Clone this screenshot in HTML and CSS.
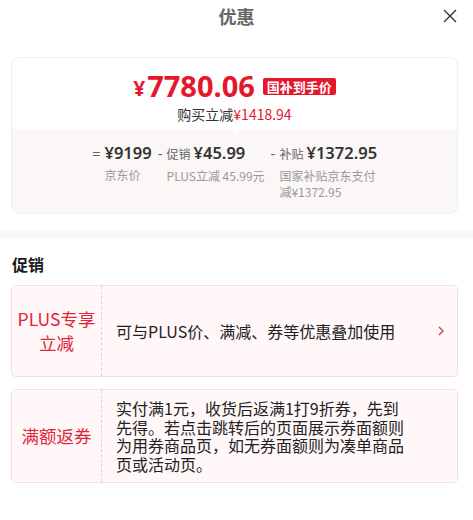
FILE: index.html
```html
<!DOCTYPE html>
<html lang="zh-CN">
<head>
  <meta charset="UTF-8">
  <title>优惠</title>
  <link rel="stylesheet" href="styles.css">
</head>
<body>

<div class="header">
  <span class="title">优惠</span>
  <svg class="close" width="14" height="14" viewBox="0 0 14 14">
    <path d="M1 1 L13 13 M13 1 L1 13" stroke="#333" stroke-width="1.4" fill="none"/>
  </svg>
</div>

<!-- price card -->
<div class="price-card">
  <div class="price-top">
    <div class="price-line">
      <span class="yen">¥</span><span class="price">7780.06</span>
      <span class="badge">国补到手价</span>
    </div>
    <div class="save-line">购买立减<span class="red">¥1418.94</span></div>
  </div>
  <div class="price-bottom">
    <div class="calc">
      <div class="calc-col">
        <span class="sign">=</span>
        <div class="calc-body">
          <div class="calc-main"><span class="num">¥9199</span></div>
          <div class="calc-sub">京东价</div>
        </div>
      </div>
      <div class="calc-col">
        <span class="sign">-</span>
        <div class="calc-body">
          <div class="calc-main"><span class="lbl">促销</span><span class="num">¥45.99</span></div>
          <div class="calc-sub">PLUS立减 45.99元</div>
        </div>
      </div>
      <div class="calc-col">
        <span class="sign">-</span>
        <div class="calc-body">
          <div class="calc-main"><span class="lbl">补贴</span><span class="num">¥1372.95</span></div>
          <div class="calc-sub">国家补贴京东支付<br>减¥1372.95</div>
        </div>
      </div>
    </div>
  </div>
</div>

<div class="band"></div>

<!-- promotions -->
<div class="promo">
  <h2>促销</h2>

  <div class="promo-item">
    <div class="promo-tag">PLUS专享<br>立减</div>
    <div class="promo-body">
      <div class="promo-text">可与PLUS价、满减、券等优惠叠加使用</div>
      <div class="promo-arrow">
        <svg width="6" height="10" viewBox="0 0 6 10">
          <path d="M1 1 L5 5 L1 9" stroke="#cf3f52" stroke-width="1.4" fill="none"/>
        </svg>
      </div>
    </div>
  </div>

  <div class="promo-item">
    <div class="promo-tag">满额返券</div>
    <div class="promo-body">
      <div class="promo-text">实付满1元，收货后返满1打9折券，先到先得。若点击跳转后的页面展示券面额则为用券商品页，如无券面额则为凑单商品页或活动页。</div>
      <div class="promo-arrow"></div>
    </div>
  </div>
</div>

</body>
</html>
```

FILE: styles.css
```css
body {
  margin: 0;
  background: #fff;
  font-family: "Noto Sans CJK SC", "Noto Sans", sans-serif;
  color: #333;
}
.header {
  height: 32px;
  display: flex;
  align-items: center;
  justify-content: center;
  position: relative;
}
.title {
  font-size: 18px;
  font-weight: bold;
  color: #666;
  line-height: 32px;
}
.close {
  position: absolute;
  right: 16px;
  top: 9px;
}
.price-card {
  margin: 25px 15px 0 11px;
  border: 1px solid #eee;
  border-radius: 8px;
  overflow: hidden;
}
.price-top {
  padding: 10px 0 5px;
  text-align: center;
  position: relative;
}
.price-top::after {
  content: "";
  position: absolute;
  left: 50%;
  bottom: -4px;
  margin-left: -4px;
  border-left: 4px solid transparent;
  border-right: 4px solid transparent;
  border-top: 4px solid #fff;
  z-index: 1;
}
.price-line {
  height: 34px;
  display: flex;
  align-items: center;
  justify-content: center;
  color: #e4182c;
}
.yen {
  font-family: "Noto Sans", sans-serif;
  font-size: 21px;
  font-weight: bold;
  margin-top: 6px;
  margin-right: 2px;
}
.price {
  font-family: "Noto Sans", sans-serif;
  font-size: 29px;
  font-weight: bold;
}
.badge {
  margin-left: 8px;
  margin-top: 3px;
  background: #e4182c;
  color: #fff;
  font-size: 13px;
  font-weight: bold;
  line-height: 17px;
  padding: 0 4px;
  border-radius: 2px;
}
.save-line {
  font-size: 14px;
  line-height: 20px;
  margin-top: 2px;
}
.red {
  color: #e4182c;
}
.price-bottom {
  background: #fcf7f7;
  padding: 13px 0 13px;
}
.calc {
  display: flex;
  justify-content: center;
  gap: 6px;
}
.calc-col {
  display: flex;
}
.sign {
  font-family: "Noto Sans", sans-serif;
  font-size: 15px;
  line-height: 22px;
  color: #666;
  margin-right: 4px;
}
.calc-main {
  display: flex;
  align-items: baseline;
  line-height: 22px;
}
.lbl {
  font-size: 12px;
  color: #666;
  margin-right: 3px;
}
.num {
  font-family: "Noto Sans", sans-serif;
  font-size: 16.5px;
  font-weight: 600;
  color: #333;
}
.calc-sub {
  font-size: 12px;
  line-height: 16px;
  color: #999;
  margin-top: 3px;
}
.band {
  height: 7px;
  background: #f6f8fc;
  margin-top: 17px;
}
.promo {
  padding: 0 15px 0 11px;
}
.promo h2 {
  margin: 14px 0 9px 1px;
  font-size: 16px;
  line-height: 24px;
  color: #1a1a1a;
}
.promo-item {
  display: flex;
  min-height: 90px;
  border: 1px solid #f4dde0;
  border-radius: 5px;
  background: #fff7f8;
  margin-bottom: 12px;
}
.promo-tag {
  width: 89px;
  flex-shrink: 0;
  display: flex;
  align-items: center;
  justify-content: center;
  text-align: center;
  font-size: 17.5px;
  line-height: 24px;
  color: #e0243a;
  border-right: 1px dashed #e6cfd2;
}
.promo-body {
  flex: 1;
  display: flex;
  align-items: center;
  padding: 9px 0 9px 14px;
}
.promo-text {
  flex: 1;
  font-size: 16px;
  line-height: 18.5px;
  color: #222;
}
.promo-arrow {
  width: 46px;
  flex-shrink: 0;
  display: flex;
  justify-content: flex-end;
  padding-right: 13px;
  box-sizing: border-box;
}
```
